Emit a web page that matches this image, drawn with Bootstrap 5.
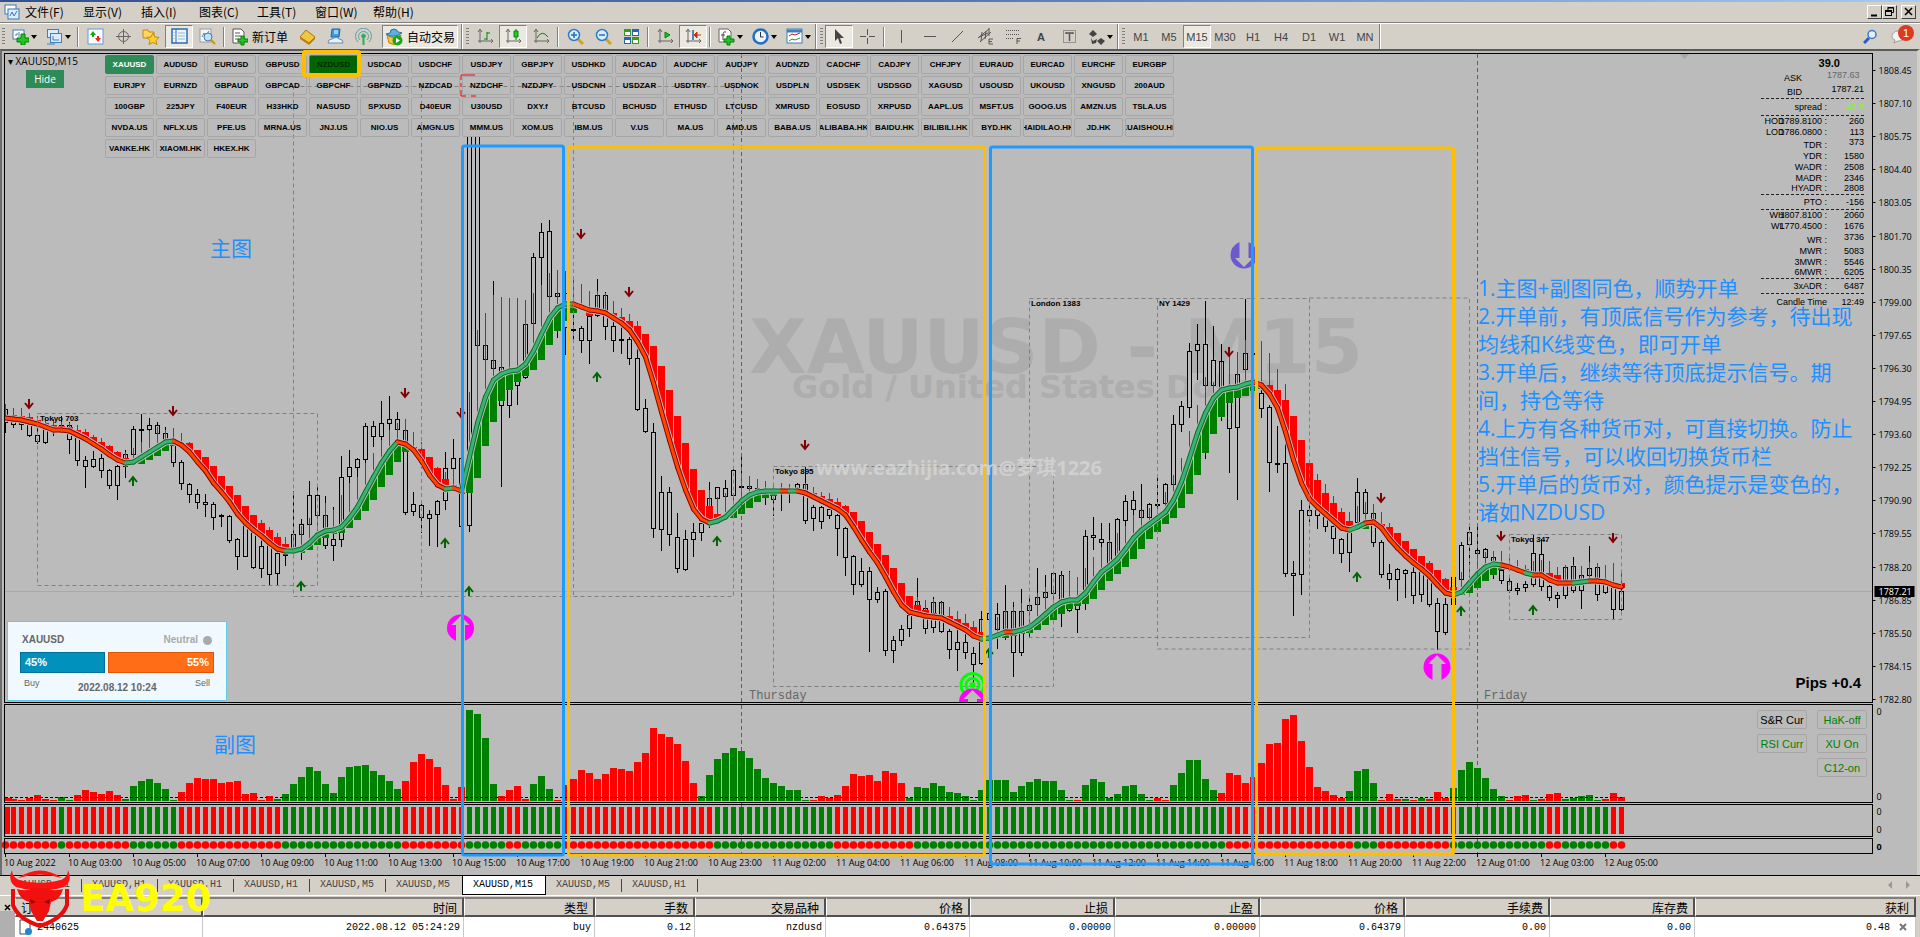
<!DOCTYPE html>
<html lang="zh-CN">
<head>
<meta charset="utf-8">
<meta name="viewport" content="width=device-width, initial-scale=1">
<title>XAUUSD,M15</title>
<link rel="stylesheet" href="https://cdn.jsdelivr.net/npm/bootstrap@5.3.0/dist/css/bootstrap.min.css">
<script src="https://cdn.jsdelivr.net/npm/bootstrap@5.3.0/dist/js/bootstrap.bundle.min.js"></script>
<style>
:root{--face:#d4d0c8;--chart:#bbb;--sig:#1e90ff;--cjk:"Noto Sans CJK SC",sans-serif;--ui:"Open Sans","Noto Sans CJK SC",sans-serif;--arial:"Liberation Sans",sans-serif;--fix:"Liberation Mono","Noto Sans CJK SC",monospace}
body{height:100vh;overflow:hidden;background:var(--face);color:#000;font:12px/16px var(--cjk)}
button{color:#000;font:inherit}
a{color:inherit;text-decoration:none}
.title-strip{height:2px;background:linear-gradient(90deg,#33518f,#5876b4 50%,#a6caf0)}
.menu-strip{height:21px;border-bottom:1px solid #808080;padding-left:4px}
.menu-strip a{width:58px;padding-left:5px}
.win-btn{width:15px;height:14px;padding:0;border:1px solid;border-color:#fff #404040 #404040 #fff;background:var(--face)}
.win-btn svg{display:block}
.tools{height:26px;border-top:1px solid #fff}
.tool-set{border-right:1px solid #808080;box-shadow:1px 0 #fff;margin-right:2px}
.grip{width:3px;height:18px;margin:0 2px;background:repeating-linear-gradient(#808080 0 1px,transparent 1px 3px)}
.tool{width:28px;height:23px;border:1px solid transparent;background:none;padding:0;display:flex;align-items:center;justify-content:center;white-space:nowrap}
.tool.wide{width:34px;gap:2px}
.tool.order{width:66px;gap:4px}
.tool.auto{width:76px;gap:4px;margin:0 3px 0 5px}
.tool.on{border-color:#808080 #fff #fff #808080;background:#ebe8e2}
.tool.tf{font:11px/14px var(--arial);color:#444}
.tool.wide::after{content:"";border:3px solid transparent;border-top:4px solid #000;border-bottom:0}
.bar-sep{width:2px;height:20px;margin:0 2px;border-left:1px solid #808080;border-right:1px solid #fff}
.alert-dot{width:16px;height:16px;right:6px;top:1px;background:#dd3a22;color:#fff;font:11px/16px var(--arial)}
.chart{background:var(--chart);border-top:2px solid #5a5a5a;border-left:2px solid #6e6e6e;border-right:3px solid var(--face);min-height:0;margin-top:0}
.chart>svg{position:absolute;left:-2px;top:0;width:calc(100% + 5px);height:100%}
.sym-head{left:6px;top:3px;font:10px/14px var(--ui)}
.hide-btn{left:24px;top:19px;width:38px;height:18px;border:0;padding:0;background:#2e8b57;color:#fff;font:10px/18px var(--ui)}
.symbols{left:103px;top:4px;display:grid;grid-template-columns:repeat(21,49px);grid-auto-rows:19px;gap:2px}
.symbols button{border:1px solid #a6a6a6;border-radius:2px;background:none;padding:0;font:bold 8px/16px var(--arial);display:flex;justify-content:center;align-items:center;overflow:hidden;white-space:nowrap}
.symbols .now{background:#2e8b57;border-color:#2e8b57;color:#fff}
.symbols .held{background:#006400;border-color:#1faa1f;color:#022b02;overflow:visible;position:relative}
.symbols .held::after{content:"";position:absolute;inset:-6px -4px -4px -8px;border:4px solid #ffbf00;border-radius:3px}
.stats{right:53px;top:5px;width:103px;font:9px/11px var(--arial)}
.stats .r10{height:10px}.stats .r11{height:11px}.stats .r14{height:14px}.stats .r16{height:16px}
.stats .line{display:flex;align-items:center}
.stats .line span:first-child{flex:1;text-align:right;padding-right:37px;margin-right:-37px}
.stats .line b{font-weight:400;width:37px;text-align:right}
.stats .apart{align-items:flex-start}
.stats .apart span:first-child{align-self:flex-end}
.stats .price span:first-child{padding-right:62px;margin-right:-37px}
.stats i{font-style:normal;margin-right:-5px}
.stats .rule{border-top:1px dashed #222}
.stats .big{font:bold 11px/14px var(--arial);padding-right:24px}
.notes{right:20px;top:223px;width:419px;color:var(--sig);font:21px/28px var(--ui)}
.pips{right:56px;top:622px;font:bold 15px/20px var(--arial)}
.switches{right:50px;top:659px;display:grid;grid-template-columns:50px 50px;gap:5px 10px}
.switches button{height:19px;border:1px solid #a6a6a6;border-radius:2px;background:none;padding:0;font:11px/16px var(--arial);white-space:nowrap}
.switches .g{color:#008000}
.mood{left:5px;top:570px;width:220px;height:80px;border:1px solid #5bcde6;background:#f0f9ff;color:#666;padding:6px 12px 0;font:9px/12px var(--arial)}
.mood .head{font:bold 10px/22px var(--arial);height:24px;padding:0 0 0 2px}
.mood .state{color:#aaa}
.mood .dot{width:9px;height:9px;background:#aaa;margin:0 2px 0 5px}
.mood .meter{height:21px;gap:3px;font:bold 11px/19px var(--arial);color:#fff}
.mood .buy{background:#0091bd;border:1px solid #00709a;padding-left:4px}
.mood .sell{background:#ff6d17;border:1px solid #e05500;padding-right:4px;text-align:right}
.mood .stamp{font-size:10px;padding-top:5px}
.tabs{height:21px;border-top:1px solid #000;box-shadow:0 -1px #fff;font:10px/18px var(--fix);color:#444;padding-left:6px;border-bottom:1px solid #fff}
.tabs a{width:76px;padding-left:10px;position:relative;white-space:nowrap}
.tabs a::after{content:"";position:absolute;right:0;top:3px;height:13px;border-right:1px solid #444}
.tabs a.cur{width:84px;background:#fff;color:#000;border:solid #000;border-width:0 1px 1px;height:19px}
.tabs a.cur::after,.tabs a.pre::after{display:none}
.term{height:40px;margin-top:1px}
.term-side{width:15px;background:linear-gradient(var(--face) 14px,#b0b0b0 14px)}
.orders{table-layout:fixed;width:calc(100% - 19px);border-collapse:separate;border-spacing:0;background:#fff}
.orders th{height:19px;line-height:14px;padding:2px 5px 0;font-weight:400;text-align:right;background:var(--face);border:solid;border-width:2px 2px 2px 1px;border-color:#808080 #505050 #505050 #fff}
.orders td{height:21px;padding:0 3px;font:10px/16px var(--fix);text-align:right;border-right:1px solid #c8c8c8}
.orders th:first-child,.orders td:first-child{text-align:left}
.brand{left:8px;bottom:8px;z-index:5;pointer-events:none}
.brand span{font:bold 37px/40px "DejaVu Sans",sans-serif;color:#ff0}
.ax{font:9px "Open Sans",sans-serif}
.ses{font:bold 8px "Liberation Sans",sans-serif}
.wm1{font:bold 75px "DejaVu Sans",sans-serif;fill:#adadad}
.wm2{font:bold 32px "DejaVu Sans",sans-serif;fill:#adadad}
.wm3{font:bold 20px "Open Sans","Noto Sans CJK SC",sans-serif;fill:#d4d4d4;fill-opacity:.85}
.day{font:12px "Liberation Mono",monospace;fill:#666}
.cap{font:21px "Noto Sans CJK SC",sans-serif;fill:#1e90ff}
</style>
</head>
<body class="d-flex flex-column">
<div class="title-strip flex-shrink-0"></div>
<nav class="menu-strip d-flex align-items-center flex-shrink-0">
  <svg width="16" height="16"><rect x="1" y="1" width="11" height="9" fill="#fff" stroke="#3a78b8"/><rect x="4" y="5" width="11" height="10" fill="#dcecfb" stroke="#3a78b8"/><path d="M6 12l2-4 2 4 3-5" fill="none" stroke="#3a78b8"/></svg>
  <a href="#">文件(F)</a><a href="#">显示(V)</a><a href="#">插入(I)</a><a href="#">图表(C)</a><a href="#">工具(T)</a><a href="#">窗口(W)</a><a href="#">帮助(H)</a>
  <div class="ms-auto d-flex me-1">
    <button class="win-btn" aria-label="最小化"><svg width="13" height="12"><path d="M3 9.500h6" stroke="#000" stroke-width="2"/></svg></button>
    <button class="win-btn me-1" aria-label="还原"><svg width="13" height="12" fill="none" stroke="#000"><path d="M5 4V1.500h5.500v5H9M4.500 2h6"/><rect x="2.500" y="4.500" width="6" height="5"/><path d="M2 5.500h7"/></svg></button>
    <button class="win-btn" aria-label="关闭"><svg width="13" height="12"><path d="M3 2l7 7M10 2l-7 7" stroke="#000" stroke-width="1.600"/></svg></button>
  </div>
</nav>
<div class="tools d-flex flex-shrink-0">
  <div class="tool-set d-flex align-items-center">
    <span class="grip"></span>
    <button class="tool wide" aria-label="新图表"><svg width="17" height="17"><rect x="1" y="2" width="11" height="9" fill="#fff" stroke="#3f7fbe"/><path d="M3 7h2V5M7 9V4" stroke="#3f7fbe" fill="none"/><path d="M9 6h4v4h4v4h-4v3H9v-3H5v-4h4z" fill="#1fc81f" stroke="#0a7a0a"/></svg></button>
    <button class="tool wide" aria-label="配置"><svg width="17" height="17" fill="#dcecfb" stroke="#3f7fbe"><rect x="1.500" y="1.500" width="11" height="8"/><rect x="4.500" y="5.500" width="11" height="9"/><path d="M7 12h6M7 8v4M1 16h8"/></svg></button>
    <span class="bar-sep"></span>
    <button class="tool" aria-label="市场报价"><svg width="17" height="17"><rect x="1" y="1" width="15" height="15" fill="#fff" stroke="#5a9bd5"/><path d="M5 9V7H3l3-4 3 4H7v2z" fill="#1a1"/><path d="M10 8v2H8l3 4 3-4h-2V8z" fill="#e22"/></svg></button>
    <button class="tool" aria-label="数据"><svg width="17" height="17" fill="none" stroke="#666"><circle cx="8.500" cy="8.500" r="5"/><path d="M8.500 1v15M1 8.500h15"/></svg></button>
    <button class="tool" aria-label="导航"><svg width="18" height="17"><path d="M1 2h5l1 2h5v6H1z" fill="#ffd75a" stroke="#c08a10"/><path d="M11 5l2 4 4 .5-3 3 1 4-4-2-4 2 1-4-3-3 4-.5z" fill="#ffd02a" stroke="#c08a10"/></svg></button>
    <button class="tool on" aria-label="终端"><svg width="17" height="17"><rect x="1" y="1" width="15" height="14" fill="#eef5fd" stroke="#2a6cb5" stroke-width="1.500"/><path d="M5 1v14" stroke="#2a6cb5"/><path d="M3 4v1M3 7v1M3 10v1M7 5h7M7 8h7M7 11h7" stroke="#9bb"/></svg></button>
    <button class="tool" aria-label="测试"><svg width="17" height="17"><rect x="1" y="1" width="11" height="13" fill="#eef5fd" stroke="#999"/><path d="M3 9l2-4 2 3 3-5" stroke="#58a" fill="none"/><circle cx="9" cy="9" r="4" fill="#bfe0f8" stroke="#47a"/><path d="M12 12l4 4" stroke="#c90" stroke-width="2"/></svg></button>
    <span class="bar-sep"></span>
    <button class="tool order"><svg width="16" height="18"><path d="M1 1h8l3 3v11H1z" fill="#fff" stroke="#555"/><path d="M3 5h5M3 8h6M3 11h4" stroke="#555"/><path d="M9 8h3v3h4v3h-4v3H9v-3H6v-3h3z" fill="#1fc81f" stroke="#0a7a0a"/></svg>新订单</button>
    <button class="tool" aria-label="指标语言"><svg width="17" height="17"><path d="M1 9L7 2l9 7-6 6z" fill="#f4c540" stroke="#a87408"/><path d="M1 9v2l9 6 6-6V9l-6 6z" fill="#b9820e"/></svg></button>
    <button class="tool" aria-label="社区"><svg width="17" height="17"><path d="M5 1h8l-1 8H4z" fill="#3f9be0" stroke="#1d64a8"/><path d="M7 3h4M7 5h4" stroke="#fff"/><path d="M1 15q0-4 4-4 5-3 7 0 4 0 4 4z" fill="#e8f2fc" stroke="#6a8cb5"/></svg></button>
    <button class="tool" aria-label="信号"><svg width="17" height="17" fill="none" stroke="#5a8"><circle cx="8.500" cy="8" r="2" fill="#3a5"/><path d="M5 12a5 5 0 1 1 7 0"/><path d="M3 14a8 8 0 1 1 11 0" stroke="#69a"/><path d="M8.500 9v8" stroke="#3a5" stroke-width="2"/></svg></button>
    <button class="tool auto on"><svg width="18" height="18"><path d="M2 7q6 5 14 0l-2 8q-5 3-10 0z" fill="#f5c544" stroke="#b58608"/><path d="M1 6q7 5 16-1-3-1-4-1Q12 1 9 1 5 1 5 5z" fill="#5ab1e0" stroke="#2b6f9e"/><circle cx="12.500" cy="12.500" r="5" fill="#18a818"/><path d="M11 10v5l4-2.500z" fill="#fff"/></svg>自动交易</button>
  </div>
  <div class="tool-set d-flex align-items-center">
    <span class="grip"></span>
    <button class="tool" aria-label="柱状图"><svg width="17" height="17" fill="none"><path d="M3 2v13M1 13h15M1 4l2-3 2 3M14 11l2 2-2 2" stroke="#666"/><path d="M10 4v8M10 5h3M7 11h3" stroke="#080"/></svg></button>
    <button class="tool on" aria-label="蜡烛图"><svg width="17" height="17" fill="none"><path d="M3 2v13M1 13h15M1 4l2-3 2 3M14 11l2 2-2 2" stroke="#666"/><path d="M11 1v11" stroke="#080"/><path d="M9 3h4v6H9z" fill="#2c2" stroke="#080"/></svg></button>
    <button class="tool" aria-label="折线图"><svg width="17" height="17" fill="none"><path d="M3 2v13M1 13h15M1 4l2-3 2 3M14 11l2 2-2 2" stroke="#666"/><path d="M4 10q5-9 11-1" stroke="#080"/></svg></button>
    <span class="bar-sep"></span>
    <button class="tool" aria-label="放大"><svg width="17" height="17"><path d="M10 10l6 6" stroke="#d3a21a" stroke-width="3"/><circle cx="7" cy="7" r="5.500" fill="#d8eefc" stroke="#2a7cc8" stroke-width="1.500"/><path d="M4 7h6M7 4v6" stroke="#2a6cb5" stroke-width="1.500"/></svg></button>
    <button class="tool" aria-label="缩小"><svg width="17" height="17"><path d="M10 10l6 6" stroke="#d3a21a" stroke-width="3"/><circle cx="7" cy="7" r="5.500" fill="#d8eefc" stroke="#2a7cc8" stroke-width="1.500"/><path d="M4 7h6" stroke="#2a6cb5" stroke-width="1.500"/></svg></button>
    <button class="tool" aria-label="平铺"><svg width="17" height="17"><path d="M1 1h7v7H1zM9 9h7v7H9z" fill="#3a9a1e"/><path d="M9 1h7v7H9zM1 9h7v7H1z" fill="#2a62b8"/><path d="M2 4h5v3H2zM10 4h5v3h-5zM2 12h5v3H2zM10 12h5v3h-5z" fill="#fff"/></svg></button>
    <span class="bar-sep"></span>
    <button class="tool" aria-label="自动滚动"><svg width="17" height="17" fill="none"><path d="M3 2v13M1 13h15M1 4l2-3 2 3M14 11l2 2-2 2" stroke="#666"/><path d="M8 4v6l5-3z" fill="#2b2" stroke="#080"/></svg></button>
    <button class="tool on" aria-label="图表平移"><svg width="17" height="17" fill="none"><path d="M3 2v13M1 13h15M1 4l2-3 2 3M14 11l2 2-2 2" stroke="#666"/><path d="M8 2v10" stroke="#26a" stroke-width="1.500"/><path d="M16 7h-6M12 4v6l-3-3z" stroke="#c30" fill="#c30"/></svg></button>
    <span class="bar-sep"></span>
    <button class="tool wide" aria-label="指标"><svg width="17" height="18"><path d="M1 1h9l3 3v10H1z" fill="#fff" stroke="#666"/><path d="M8 4q-3-1-3 3v5M3 7h4" stroke="#444" fill="none"/><path d="M9 8h3v3h4v3h-4v3H9v-3H6v-3h3z" fill="#1fc81f" stroke="#0a7a0a"/></svg></button>
    <button class="tool wide" aria-label="周期"><svg width="17" height="17"><circle cx="8.500" cy="8.500" r="7" fill="#e9f4fe" stroke="#1f6fc4" stroke-width="2.500"/><path d="M8.500 4v5h3" fill="none" stroke="#333"/></svg></button>
    <button class="tool wide" aria-label="模板"><svg width="17" height="17"><rect x="1" y="1" width="15" height="14" fill="#fff" stroke="#3f7fbe"/><path d="M1 3h15" stroke="#3f7fbe" stroke-width="3"/><path d="M3 8l3-2 3 1 5-2" stroke="#a22" fill="none"/><path d="M3 13l3-2 3 1 5-2" stroke="#292" fill="none"/></svg></button>
  </div>
  <div class="tool-set d-flex align-items-center">
    <span class="grip"></span>
    <button class="tool on" aria-label="光标"><svg width="12" height="16"><path d="M2 0v12l3-3 2 6 2-1-2-5h4z" fill="#444"/></svg></button>
    <button class="tool" aria-label="十字准线"><svg width="15" height="15"><path d="M7.500 0v6M7.500 9v6M0 7.500h6M9 7.500h6" stroke="#555"/></svg></button>
    <span class="bar-sep"></span>
    <button class="tool" aria-label="垂直线"><svg width="15" height="15"><path d="M7.500 1v13" stroke="#555"/></svg></button>
    <button class="tool" aria-label="水平线"><svg width="15" height="15"><path d="M2 7.500h12" stroke="#555"/></svg></button>
    <button class="tool" aria-label="趋势线"><svg width="15" height="15"><path d="M2 13L13 2" stroke="#555"/></svg></button>
    <button class="tool" aria-label="等距通道"><svg width="17" height="17"><path d="M1 10L12 1M3 14L14 4M4 13l1-9M8 11l1-8M12 8V0M2 9l9-4" stroke="#555" fill="none"/><path d="M16 11h-4v5h4M12 13.500h3" stroke="#555" fill="none"/></svg></button>
    <button class="tool" aria-label="斐波纳契"><svg width="17" height="17"><path d="M1 2.500h14M1 6.500h14M1 10.500h8" stroke="#555" stroke-dasharray="1 1"/><path d="M16 10.500h-4V16M12 13h3" stroke="#555" fill="none"/></svg></button>
    <button class="tool tf fw-bold">A</button>
    <button class="tool" aria-label="文字标签"><svg width="15" height="15" fill="none" stroke="#555"><rect x="1.500" y="1.500" width="12" height="12" stroke-dasharray="1 1"/><path d="M4 5V4h7v1M7.500 4v8" stroke-width="1.500"/></svg></button>
    <button class="tool wide" aria-label="箭头"><svg width="17" height="16" fill="#444"><path d="M1 5l4-4 4 4-4 3zM9 12l4-3 4 3-4 4zM3 9l2 3 4-2-1 4-4 1z"/></svg></button>
  </div>
  <div class="tool-set d-flex align-items-center">
    <span class="grip"></span>
    <button class="tool tf">M1</button><button class="tool tf">M5</button><button class="tool tf on">M15</button><button class="tool tf">M30</button><button class="tool tf">H1</button><button class="tool tf">H4</button><button class="tool tf">D1</button><button class="tool tf">W1</button><button class="tool tf">MN</button>
  </div>
  <div class="ms-auto d-flex align-items-center position-relative">
    <button class="tool" aria-label="搜索"><svg width="15" height="15"><path d="M6 9l-5 5" stroke="#2a5cc8" stroke-width="3"/><circle cx="9" cy="5.500" r="4" fill="#e4f0fd" stroke="#3a76d0" stroke-width="1.500"/></svg></button>
    <button class="tool me-2" aria-label="消息"><svg width="16" height="14"><path d="M8 1c4 0 6 2 6 5s-2 5-6 5l-4 2 1-3C2 9 2 7 2 6s2-5 6-5z" fill="#f4f4f4" stroke="#999"/></svg></button>
    <span class="alert-dot position-absolute rounded-circle text-center">1</span>
  </div>
</div>

<main class="chart flex-grow-1 position-relative">
  <svg id="plot"></svg>
  <div class="sym-head position-absolute">▾ XAUUSD,M15</div>
  <button class="hide-btn position-absolute">Hide</button>
  <div class="symbols position-absolute" id="symbols"></div>
  <div class="stats position-absolute" id="stats"></div>
  <div class="notes position-absolute">1.主图+副图同色，顺势开单<br>2.开单前，有顶底信号作为参考，待出现<br>均线和K线变色，即可开单<br>3.开单后，继续等待顶底提示信号。期<br>间，持仓等待<br>4.上方有各种货币对，可直接切换。防止<br>挡住信号，可以收回切换货币栏<br>5.开单后的货币对，颜色提示是变色的，<br>诸如NZDUSD</div>
  <div class="pips position-absolute">Pips +0.4</div>
  <div class="switches position-absolute">
    <button>S&amp;R Cur</button><button class="g">HaK-off</button>
    <button class="g">RSI Curr</button><button class="g">XU On</button>
    <span></span><button class="g">C12-on</button>
  </div>
  <section class="mood position-absolute">
    <div class="head d-flex align-items-center"><span class="me-auto">XAUUSD</span><span class="state">Neutral</span><span class="dot rounded-circle"></span></div>
    <div class="meter d-flex"><div class="buy" style="width:44%">45%</div><div class="sell flex-grow-1">55%</div></div>
    <div class="d-flex justify-content-between px-1 pt-1"><span>Buy</span><b class="stamp">2022.08.12 10:24</b><span>Sell</span></div>
  </section>
</main>

<nav class="tabs d-flex flex-shrink-0">
  <a href="#">XAUUSD,H1</a><a href="#">XAUUSD,H1</a><a href="#">XAUUSD,H1</a><a href="#">XAUUSD,H1</a><a href="#">XAUUSD,M5</a><a href="#" class="pre">XAUUSD,M5</a><a href="#" class="cur">XAUUSD,M15</a><a href="#">XAUUSD,M5</a><a href="#">XAUUSD,H1</a>
  <svg class="ms-auto me-2" width="26" height="18" fill="#999"><path d="M6 5v8L2 9zM20 5v8l4-4z"/></svg>
</nav>
<section class="term d-flex flex-shrink-0">
  <div class="term-side"><svg width="15" height="14"><path d="M5 5l5 5M10 5l-5 5" stroke="#000" stroke-width="1.500"/></svg></div>
  <table class="orders">
    <colgroup><col style="width:188px"><col style="width:261px"><col style="width:131px"><col style="width:100px"><col style="width:131px"><col style="width:144px"><col style="width:145px"><col style="width:145px"><col style="width:145px"><col style="width:145px"><col style="width:145px"><col></colgroup>
    <thead><tr><th>订单</th><th>时间</th><th>类型</th><th>手数</th><th>交易品种</th><th>价格</th><th>止损</th><th>止盈</th><th>价格</th><th>手续费</th><th>库存费</th><th>获利</th></tr></thead>
    <tbody><tr><td><svg class="me-1" width="15" height="17"><path d="M2 1h7l3 3v11H2z" fill="#fff" stroke="#444"/><circle cx="10.500" cy="12.500" r="3.500" fill="#1c86d8"/></svg>2440625</td><td>2022.08.12 05:24:29</td><td>buy</td><td>0.12</td><td>nzdusd</td><td>0.64375</td><td>0.00000</td><td>0.00000</td><td>0.64379</td><td>0.00</td><td>0.00</td><td>0.48<svg class="ms-2 me-1" width="10" height="10"><path d="M2 2l6 6M8 2l-6 6" stroke="#777" stroke-width="2"/></svg></td></tr></tbody>
  </table>
</section>
<div class="brand position-absolute d-flex align-items-center">
  <svg width="64" height="60" viewBox="0 0 64 60"><path d="M5 20V36Q10 50 32 57Q54 50 59 36V20" fill="none" stroke="#e80c0c" stroke-width="4"/><path d="M4 1Q-1 12 8 18Q20 22 32 21Q44 22 56 18Q65 12 60 1Q60 8 53 11Q42 14 32 14Q22 14 11 11Q4 8 4 1z" fill="#f11"/><path d="M10 9Q32-6 54 9Q32 2 10 9z" fill="#f11"/><path d="M9 20Q20 23 24 19H40Q44 23 55 20Q52 31 43 33L41 42 35 52H29L23 42 21 33Q12 31 9 20z" fill="#f01010"/><path d="M22 30l6 3-5 2zM42 30l-6 3 5 2z" fill="#900"/></svg>
  <span class="ms-2">EA920</span>
</div>

<script>
/* Symbol switcher */
const symbols = `XAUUSD AUDUSD EURUSD GBPUSD NZDUSD USDCAD USDCHF USDJPY GBPJPY USDHKD AUDCAD AUDCHF AUDJPY AUDNZD CADCHF CADJPY CHFJPY EURAUD EURCAD EURCHF EURGBP
EURJPY EURNZD GBPAUD GBPCAD GBPCHF GBPNZD NZDCAD NZDCHF NZDJPY USDCNH USDZAR USDTRY USDNOK USDPLN USDSEK USDSGD XAGUSD USOUSD UKOUSD XNGUSD 200AUD
100GBP 225JPY F40EUR H33HKD NASUSD SPXUSD D40EUR U30USD DXY.f BTCUSD BCHUSD ETHUSD LTCUSD XMRUSD EOSUSD XRPUSD AAPL.US MSFT.US GOOG.US AMZN.US TSLA.US
NVDA.US NFLX.US PFE.US MRNA.US JNJ.US NIO.US AMGN.US MMM.US XOM.US IBM.US V.US MA.US AMD.US BABA.US ALIBABA.HK BAIDU.HK BILIBILI.HK BYD.HK HAIDILAO.HK JD.HK KUAISHOU.HK
VANKE.HK XIAOMI.HK HKEX.HK`.split(/\s+/);
document.getElementById('symbols').innerHTML = symbols.map(s =>
  `<button${s === 'XAUUSD' ? ' class="now"' : s === 'NZDUSD' ? ' class="held"' : ''}>${s}</button>`).join('');

/* Range statistics: [row class, label, value] or a rule */
const stats = [
  ['r14 price apart','ASK','<span style="color:#666">1787.63</span>'],['r14 price apart','BID','1787.21'],0,
  ['r16','spread :','<span style="color:#7fff00">42.0</span>'],0,
  ['r11','<i>HOD</i>1789.8100 :','260'],['r10','<i>LOD</i>1786.0800 :','113'],['r14 apart','TDR :','373'],['r11','YDR :','1580'],
  ['r11','WADR :','2508'],['r10','MADR :','2346'],['r11','HYADR :','2808'],0,['r14','PTO :','-156'],0,
  ['r11','<i>WH</i>1807.8100 :','2060'],['r11','<i>WL</i>1770.4500 :','1676'],['r14 apart','WR :','3736'],['r11','MWR :','5083'],
  ['r10','3MWR :','5546'],['r11','6MWR :','6205'],0,['r14','3xADR :','6487'],0,['r16','Candle Time','12:49']];
document.getElementById('stats').innerHTML = '<div class="big text-end">39.0</div>' + stats.map(r =>
  r ? `<div class="line ${r[0]}"><span>${r[1]}</span><b>${r[2]}</b></div>` : '<div class="rule"></div>').join('');

/* Each segment: first bar, base line, then per bar high, body top, body bottom, low in thirds of a pixel under the base */
const candles = [
[0,380,'72 88 130 158,100 115 135 145,105 120 135 150,118 125 167 170,135 165 187 193,130 137 188 193,130 135 160 168,108 135 150 160,125 135 179 222,145 160 242 257,228 241 261 324,212 237 261 263,222 234 272 293,267 270 318 327,255 258 318 360,210 222 260 293,137 147 225 230,101 148 152 187,113 135 150 200,125 134 161 195,140 158 185 190,180 190 248 262,240 247 312 330,310 313 344 368,326 342 368 386,341 367 374 411,365 373 413 450,403 406 412 440,405 408 482 489,473 478 530 570,420 430 530 532,445 450 564 568,470 499 566 595,480 490 584 615,490 519 581 614,515 521 527 558,333 462 515 520,417 432 464 540,303 345 434 490,317 345 407 480,348 405 497 506,382 478 497 543,228 291 480 500,210 261 290 400,234 237 263 380,130 139 239 300,123 139 171 200,62 129 171 260,47 117 131 220,96 117 151 200,135 150 399 404,335 373 395 407,363 375 413 460,390 403 416 497,360 363 404 500,215 264 362 390,177 234 266 320,230 235 440 445'],
[58,140,'-60 -60 1157 1176,-60 -60 617 700,598 616 661 700,423 661 686 720,660 682 799 1040,740 745 799 833,700 722 738 795,540 553 715 718,339 352 553 640,249 277 353 600,240 274 470 560,440 458 470 593,440 460 565 645,411 566 569 600,557 565 602 638,520 528 602 672,417 465 529 532,457 465 560 600,540 559 602 635,560 597 602 642,590 598 656 674,600 655 811 812,777 804 875 880,849 877 1168 1193'],
[82,440,'108 157 269 332,140 157 284 318,219 291 386 398,270 297 389 393,248 276 299 350,240 250 278 303,126 175 240 263,140 142 176 230,121 145 170 225,88 90 167 200,50 138 143 190,108 138 146 160,140 145 160 170,140 165 172 195,150 160 180 228,140 155 160 213,150 157 163 188,128 132 150 155,82 132 242 251,195 201 236 272,198 202 245 266,203 207 227 236,222 226 266 348,260 265 353 408,345 349 434 465,354 393 434 440,381 393 479 636,440 456 479 488,448 454 632 648,588 600 632 669,555 567 602 617,520 525 566 590,414 483 500 520,500 504 566 581,470 487 563 578,483 486 575 578,568 573 629 657,567 606 629 692,578 606 638 657,622 639 674 730,513 537 672 675,515 519 540 640,489 522 570 627,435 513 590 600,486 513 638 711,447 513 638 648'],
[128,280,'945 975 994 1075,864 951 976 1050,885 936 953 1000,876 879 941 990,873 885 975 1042,873 984 992 995,950 955 991 1059,750 768 960 990,711 766 773 810,729 777 788 880,729 786 860 870,714 717 840 860,645 663 722 830,633 660 689 780,612 690 713 760,668 672 713 740,585 672 674 730,609 612 671 700,405 432 614 690,363 378 434 456,189 213 383 413,132 192 212 300,63 192 318 537,138 240 318 360,192 243 340 423,330 345 446 579,280 282 443 660,57 219 269 310,144 219 221 390,330 339 388 414,375 381 548 636,438 549 551 579,490 549 881 890,843 879 887 1008,660 690 884 945,665 690 707 726,680 690 707 747,700 712 740 756,730 738 777 823,775 777 821 849,745 750 819 876,594 636 730 750,627 636 703 730,672 699 788 801,780 786 884 893,852 879 899 927,864 867 899 963,867 870 881 954,855 876 947 972,865 872 944 966,885 890 974 981,954 969 1057 1110,954 972 1059 1065,888 892 974 975,786 795 899 905,729 756 794 890,741 810 821 880,805 808 833 870,813 831 880 896,865 870 903 912,888 903 932 940,909 925 932 945,904 912 923 936,762 819 914 921,777 822 920 933,915 919 953 963,936 946 956 984,854 861 947 956,831 858 932 938,870 885 932 987,798 864 888 895,852 861 944 963,900 905 938 942,849 910 989 1017,880 933 989 994']];
/* Moving average, same layout with one value a bar */
const average = [
[0,380,'115 118 121 126 132 142 149 151 152 165 178 192 207 224 240 248 246 232 217 202 187 183 196 217 245 273 308 337 367 402 428 450 469 489 506 513 514 507 488 466 454 450 440 414 382 337 290 250 214 187 191 211 244 286 314 326 325 334'],
[58,140,'950 850 770 720 702 694 691 672 633 582 535 504 493 492 501 510 512 518 535 550 570 605 650 730'],
[82,440,'-85 0 82 150 208 238 249 242 230 207 182 165 157 153 152 152 152 153 158 170 183 195 207 226 260 300 337 370 412 455 495 515 523 529 531 534 545 558 571 588 597 594 586 577 575 571'],
[128,280,'1040 1023 1003 982 967 961 960 938 905 875 858 838 806 775 750 731 714 695 661 605 535 460 400 354 330 325 322 311 306 315 342 385 455 540 610 658 682 703 724 743 750 741 728 727 745 776 803 827 850 866 888 915 940 946 935 910 882 862 853 854 860 870 880 884 886 900 908 908 908 907 903 903 906 915 921']];
/* Smoothed trend bars: outer edge and wick top */
const trend = [
[0,380,'105 72,105 85,108 85,112 100,120 108,128 115,134 118,138 125,140 130,149 135,156 148,171 165,186 175,198 195,216 213,234 215,246 203,248 187,236 152,224 140,210 150,196 143,189 158,190 187,210 210,231 231,258 258,288 288,318 318,345 345,378 378,405 405,430 420,450 442,471 460,491 470,515 460,515 438,506 415,491 400,470 370,460 390,455 345,440 310,416 290,389 250,356 220,318 180,282 150,242 130,212 117,200 155,207 187,231 231,264 262,297 275,316 266,338 300'],
[58,140,'1055 755,1010 570,914 520,842 465,780 470,747 474,723 474,705 480,686 458,656 435,611 398,570 390,540 393,517 411,505 432,524 453,505 453,515 460,520 483,531 503,543 522,558 543,582 582,618 618'],
[82,440,'-222 -222,-149 -149,-72 -72,9 9,87 87,150 150,198 150,222 170,235 160,231 160,218 100,201 108,182 117,170 123,165 128,156 130,155 132,155 140,152 128,160 142,168 155,177 160,186 175,197 195,216 216,243 243,276 276,312 312,345 345,384 384,429 429,468 468,495 470,510 480,520 476,525 485,527 500,537 513,549 523,561 543,576 540,598 590,590 530,590 510,586 500,580 490'],
[128,280,'1056 975,1048 940,1032 920,1016 930,998 885,983 875,974 892,969 864,953 830,926 800,900 780,878 760,857 738,833 705,803 690,773 685,752 680,728 635,710 585,681 533,638 453,581 375,515 290,458 305,407 245,365 228,350 216,345 180,329 170,325 183,315 219,330 267,360 312,408 408,480 480,549 540,600 582,639 612,669 648,696 683,723 696,745 678,743 666,730 672,732 696,741 730,759 759,783 783,807 807,828 828,849 842,870 870,897 893,921 921,943 876,935 850,920 822,899 817,881 813,868 813,858 835,865 840,868 855,878 843,880 840,879 843,885 860,900 855,903 854,900 857,900 845,905 849,899 855,905 850,909 869']];
/* Histogram tops in thirds of a pixel */
const hist = '324 327 330 324 315 327 333 321 330 315 300 306 312 303 315 327 288 273 267 279 297 330 306 279 264 267 267 279 276 273 312 309 330 318 327 312 282 261 231 243 282 309 261 231 228 225 243 255 273 297 273 216 192 207 231 285 327 291 60 72 144 282 318 300 288 327 282 258 297 333 285 267 240 249 267 252 234 237 243 216 189 114 132 141 162 213 279 318 255 207 189 174 183 204 237 264 279 288 300 300 333 330 318 324 315 288 252 258 255 273 243 249 279 324 291 294 279 288 306 309 318 330 300 270 270 270 306 288 276 267 273 273 300 330 330 285 267 276 324 312 288 285 312 330 324 333 285 249 210 210 267 300 309 249 255 279 261 219 162 159 87 75 153 231 291 303 315 324 303 243 237 279 333 312 327 327 333 324 327 306 324 294 240 216 234 264 297 318 330 318 315 330 327 312 309 327 324 318 315 333 327 309 321'.split(' ');
const inside = ranges => i => ranges.some(([a, b]) => i >= a && i <= b);
const histUp = inside([[7,8],[15,21],[34,49],[58,61],[66,68],[87,100],[113,133],[135,143],[146,151],[168,171],[175,175],[177,177],[181,187],[191,191],[195,199]]);
const barUp = inside([[7,7],[16,21],[35,49],[58,62],[65,69],[89,103],[114,152],[169,171],[181,192],[195,200]]);
const trendUp = inside([[17,21],[37,50],[58,71],[90,97],[99,99],[123,157],[170,171],[182,187],[198,199]]);
const averageUp = inside([[15,20],[35,48],[55,55],[57,70],[88,96],[98,98],[122,124],[126,155],[168,169],[181,186],[190,190],[196,197]]);

const RED = '#f00', GREEN = '#008000', X = i => 5 + 8 * i;
const rows = segs => segs.flatMap(([, base, text]) => text.split(text.includes(',') ? ',' : ' ')
  .map(r => r.split(' ').map(v => Math.round(base + v / 3))));
const line = (x1, y1, x2, y2, c, extra = '') => `<path d="M${x1} ${y1}L${x2} ${y2}" stroke="${c}" ${extra}/>`;
const rect = (x, y, w, h, extra) => `<rect x="${x}" y="${y}" width="${w}" height="${h}" ${extra}/>`;
const text = (x, y, cls, t, extra = '') => `<text x="${x}" y="${y}" class="${cls}" ${extra}>${t}</text>`;

function draw() {
  const svg = document.getElementById('plot'), width = svg.clientWidth, R = width - 47.5;
  const c = rows(candles), m = rows(average).map(r => r[0]), t = rows(trend);
  let s = '<defs><clipPath id="main"><rect x="4" y="137" width="' + (R - 4) + '" height="565"/></clipPath></defs><g transform="translate(0,-51)">';
  s += text(749, 373, 'wm1', 'XAUUSD - M15') + text(792, 398, 'wm2', 'Gold / United States Dollar');
  s += line(5, 591.5, R, 591.5, '#a9a9a9');
  s += '<g shape-rendering="crispEdges" clip-path="url(#main)">';
  c.forEach(([h, a, b, l], i) => {
    s += line(X(i) + .5, h, X(i) + .5, l, '#000') + rect(X(i) - 1.5, a + .5, 4, Math.max(b - a - 1, 1), 'fill="#bbb" stroke="#000"');
  });
  t.forEach(([o, w], i) => {
    const col = trendUp(i) ? GREEN : RED, top = Math.min(o, m[i]);
    s += line(X(i) + .5, w, X(i) + .5, m[i], col) + rect(X(i) - 3, top, 7, Math.abs(o - m[i]) + 1, `fill="${col}"`);
  });
  s += '</g><g clip-path="url(#main)" fill="none" stroke-linejoin="round">';
  const path = m.map((y, i) => (i ? 'L' : 'M') + (X(i) + .5) + ' ' + y).join('');
  s += `<path d="${path}" stroke="#bbb" stroke-width="7"/>`;
  for (let i = 0; i < m.length - 1; i++) {
    const up = averageUp(i), a = [X(i) + .5, m[i], X(i + 1) + .5, m[i + 1]];
    s += line(...a, up ? '#0a6e2c' : '#8b0000', 'stroke-width="5" stroke-linecap="round"');
  }
  for (let i = 0; i < m.length - 1; i++) {
    const up = averageUp(i), a = [X(i) + .5, m[i], X(i + 1) + .5, m[i + 1]];
    s += line(...a, up ? '#3cb371' : '#ff4500', 'stroke-width="3" stroke-linecap="round"');
  }
  s += '</g>';
  /* trading sessions and day separators */
  const dash = 'fill="none" stroke="#808080" stroke-dasharray="4 3"';
  [[37,413,317,585],[293,86,733,596],[773,466,1053,686],[1029,298,1309,637],[1509,534,1621,619]]
    .forEach(([a, b, x, y]) => s += rect(a + .5, b + .5, x - a, y - b, dash));
  s += `<path d="M421.5 87v509M573.5 87v509M1157.500 299v350h312v-351h-160" ${dash}/>`;
  [741, 1477].forEach(x => s += line(x + .5, 54, x + .5, 853, '#5f5f5f', 'stroke-dasharray="4 3"'));
  [[40,421,'Tokyo 703'],[775,474,'Tokyo 895'],[1031,306,'London 1383'],[1159,306,'NY 1429'],[1511,542,'Tokyo 347']]
    .forEach(a => s += text(a[0], a[1], 'ses', a[2]));
  s += text(749, 699, 'day', 'Thursday') + text(1484, 699, 'day', 'Friday');
  s += text(210, 256, 'cap', '主图') + text(214, 752, 'cap', '副图');
  s += '<path d="M475 75h-14v5m0 3v4m0 3v6h5m5 0h5" fill="none" stroke="red"/>';
  /* entry arrows */
  [[29,404],[173,411],[405,393],[461,413],[581,234],[629,292],[805,445],[1229,352],[1381,498],[1501,536],[1613,538]]
    .forEach(([x, y]) => s += `<path d="M${x - 4} ${y - 1}l4 5 4-5M${x} ${y - 5}v9" fill="none" stroke="#800000" stroke-width="2"/>`);
  [[133,481],[301,586],[445,543],[469,591],[597,377],[717,541],[989,653],[1357,577],[1461,611],[1533,610]]
    .forEach(([x, y]) => s += `<path d="M${x - 4} ${y + 1}l4-5 4 5M${x} ${y + 5}v-9" fill="none" stroke="#006400" stroke-width="2"/>`);
  const disc = (x, y, col, turn) => `<g transform="translate(${x},${y}) rotate(${turn})"><circle r="13.500" fill="${col}"/><path d="M0-12L9-3H4.500V14H-4.500V-3H-9z" fill="#bbb"/></g>`;
  s += disc(460.5, 628, '#f0f', 0) + disc(1437, 667, '#f0f', 0) + disc(1244, 255, '#6a5acd', 180);
  s += '<g clip-path="url(#main)"><g fill="none" stroke="#0f0" stroke-width="3"><circle cx="972.500" cy="685" r="11.500"/><circle cx="972.500" cy="685" r="6.500"/><circle cx="972.500" cy="685" r="1.500"/></g>' + disc(972.5, 702, '#f0f', 0) + '</g>';
  /* lower panes */
  s += '<g shape-rendering="crispEdges">';
  hist.forEach((v, i) => {
    const h = Math.max(1, Math.round((333 - v) / 3));
    s += rect(Math.max(5, X(i) - 3), 801 - h, 7, h, `fill="${histUp(i) ? GREEN : RED}"`);
    s += rect(Math.max(5, X(i) - 2), 807, 5, 27, `fill="${barUp(i) ? GREEN : RED}"`);
  });
  s += line(5, 797.5, 1622, 797.5, '#000', 'stroke-dasharray="3 2"') + '</g>';
  hist.forEach((v, i) => s += `<circle cx="${X(i) + .5}" cy="845" r="3.800" fill="${barUp(i) ? GREEN : RED}"/>`);
  [[53,702],[704,802],[804,836],[838,853]].forEach(([a, b]) => s += rect(4.5, a + .5, R - 4.5, b - a, 'fill="none" stroke="#000"'));
  /* scales */
  for (let k = 0; k < 20; k++) {
    const y = Math.round(70 + k * 33.1);
    s += line(R, y + .5, R + 3, y + .5, '#000') + text(R + 6, y + 4, 'ax', (1808.45 - 1.35 * k).toFixed(2));
  }
  s += rect(R + 2, 586, 40, 11, 'fill="#000"') + text(R + 6, 595, 'ax', '1787.21', 'fill="#fff"');
  [711, 796, 811, 829, 846].forEach((y, i) => s += text(R + 4, y + 4, 'ax', '0', i === 4 ? 'style="font-weight:bold"' : ''));
  const days = ['10 Aug 2022'];
  [['10 Aug', 3, 23], ['11 Aug', 2, 22], ['12 Aug', 1, 5]].forEach(([d, a, b]) => {
    for (let h = a; h <= b; h += 2) days.push(`${d} ${String(h).padStart(2, '0')}:00`);
  });
  days.forEach((d, k) => s += line(5.5 + 64 * k, 854, 5.5 + 64 * k, 857, '#000') + text(4 + 64 * k, 866, 'ax', d));
  /* marked phases */
  [[462,146,101,709,'#1e9bff'],[568,147,416,708,'#ffbf00'],[990,147,262,717,'#1e9bff'],[1256,148,197,706,'#ffbf00']]
    .forEach(([x, y, w, h, col]) => s += rect(x + .5, y, w, h, `rx="2" fill="none" stroke="${col}" stroke-width="3"`));
  s += text(816, 475, 'wm3', 'www.eazhijia.com@梦琪1226');
  s += '<path d="M1680 54h9l-4.500 5z" fill="#a5a5a5"/>';
  svg.innerHTML = s + '</g>';
}
draw();
addEventListener('resize', draw);
</script>
</body>
</html>
